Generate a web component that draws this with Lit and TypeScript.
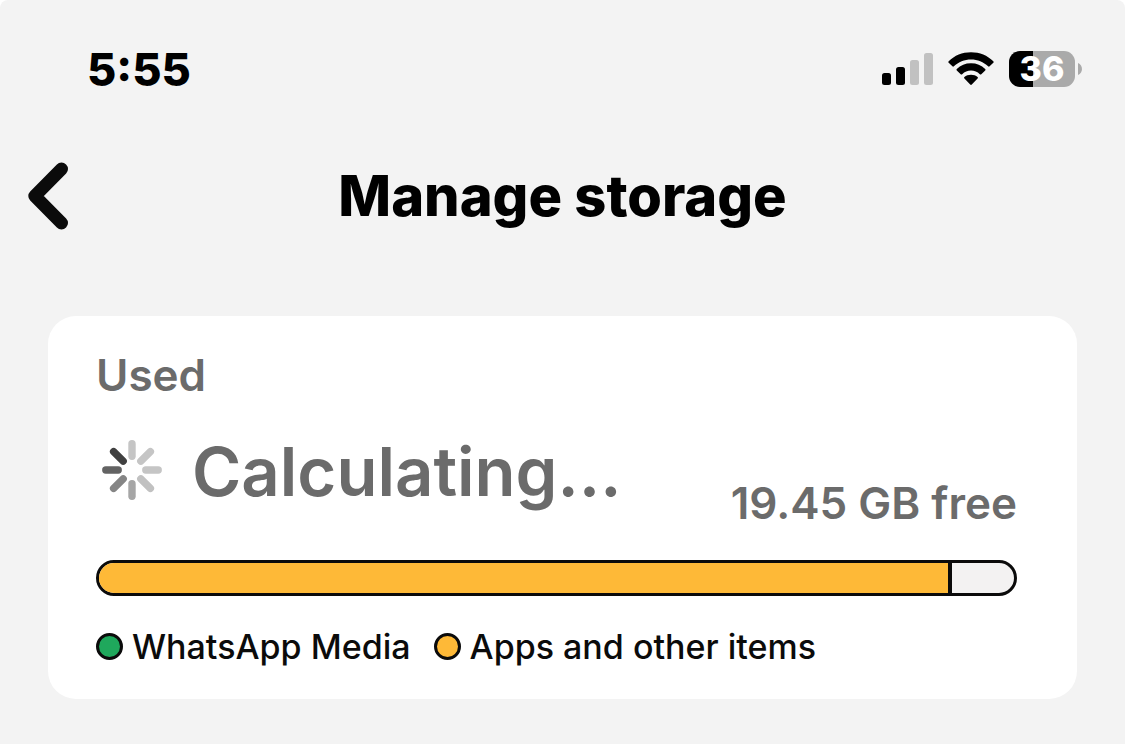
import { LitElement, html, css, svg } from "lit";
import { customElement, property } from "lit/decorators.js";
import { styleMap } from "lit/directives/style-map.js";

@customElement("status-bar")
class StatusBar extends LitElement {
  @property() time = "5:55";
  @property({ type: Number }) battery = 36;

  static styles = css`
    :host {
      display: flex;
      align-items: center;
      justify-content: space-between;
      height: 40px;
      padding: 49px 43px 0 87px;
    }
    .time {
      font-size: 45px;
      line-height: 44px;
      font-weight: 800;
      padding-top: 2px;
    }
    .icons {
      display: flex;
      align-items: center;
    }
    .signal {
      display: block;
      width: 52px;
      height: 34px;
      margin-right: 14px;
    }
    .wifi {
      display: block;
      width: 46px;
      height: 34px;
      margin-right: 15px;
    }
    .battery {
      display: flex;
      align-items: center;
      justify-content: center;
      width: 66px;
      height: 36px;
      border-radius: 11px;
      color: #fff;
      font-size: 34px;
      line-height: 36px;
      font-weight: 800;
    }
    .nub {
      display: block;
      width: 4px;
      height: 12px;
      margin-left: 3px;
    }
  `;

  render() {
    const level = `linear-gradient(to right, #000 ${this.battery}%, #aaa ${this.battery}%)`;
    return html`
      <time class="time">${this.time}</time>
      <div class="icons">
        <svg class="signal" viewBox="0 0 52 34" aria-hidden="true">
          <rect x="0" y="21" width="9" height="12" rx="2.5" />
          <rect x="14" y="15" width="9" height="18" rx="2.5" />
          <rect x="28" y="8" width="9" height="25" rx="2.5" fill="#c1c1c1" />
          <rect x="42" y="1" width="9" height="32" rx="2.5" fill="#c1c1c1" />
        </svg>
        <svg class="wifi" viewBox="0 0 46 34" aria-hidden="true">
          <path d="M23 .3C31.800 .3 39.500 3.600 45.300 9.200Q46.100 10 45.300 10.800L41.600 14.300Q40.900 15 40.100 14.300C35.500 9.900 29.500 7.400 23 7.400S10.500 9.900 5.900 14.300Q5.100 15 4.400 14.300L.7 10.800Q-.1 10 .7 9.200C6.500 3.600 14.200 .3 23 .3Z" />
          <path d="M23 11.300C28.600 11.300 33.400 13.300 37.200 16.900Q38 17.700 37.200 18.500L33.300 22.200Q32.600 22.900 31.800 22.200C29.400 20 26.400 18.600 23 18.600S16.600 20 14.200 22.200Q13.400 22.900 12.700 22.200L8.800 18.500Q8 17.700 8.800 16.900C12.600 13.300 17.400 11.300 23 11.300Z" />
          <path d="M23 22.700C25.600 22.700 27.900 23.500 29.600 24.900Q30.400 25.700 29.600 26.500L23.800 32.500Q23 33.300 22.200 32.500L16.400 26.500Q15.600 25.700 16.400 24.900C18.100 23.500 20.400 22.700 23 22.700Z" />
        </svg>
        <div class="battery" style=${styleMap({ background: level })}>${this.battery}</div>
        <svg class="nub" viewBox="0 0 4 12" aria-hidden="true">
          <path d="M0 0C5.300 2 5.300 10 0 12Z" fill="#aaa" />
        </svg>
      </div>
    `;
  }
}

@customElement("activity-spinner")
class ActivitySpinner extends LitElement {
  static styles = css`
    :host {
      display: block;
    }
    .spinner {
      display: block;
      width: 60px;
      height: 60px;
    }
  `;

  private shades = ["#c5c5c5", "#c5c5c5", "#c5c5c5", "#c1c1c1", "#a6a6a6", "#858585", "#636363", "#404040"];

  render() {
    return html`
      <svg class="spinner" viewBox="0 0 60 60" aria-hidden="true">
        ${this.shades.map(
          (shade, i) => svg`<line x1="30" y1=${i % 2 ? 4 : 3.8} x2="30" y2=${i % 2 ? 17.5 : 16.2} stroke=${shade}
            stroke-width="7.400" stroke-linecap="round" transform="rotate(${i * 45} 30 30)" />`
        )}
      </svg>
    `;
  }
}

@customElement("storage-card")
class StorageCard extends LitElement {
  @property() free = "19.45 GB";
  @property({ type: Number }) used = 93.2;

  static styles = css`
    :host {
      display: block;
      background: #fff;
      border-radius: 28px;
      padding: 35px 60px 32px 48px;
    }
    .label,
    .free {
      margin: 0;
      color: #6b6b6b;
      font-size: 44px;
      line-height: 48px;
      font-weight: 600;
    }
    .summary {
      display: flex;
      align-items: flex-end;
      justify-content: space-between;
      height: 128px;
    }
    .status {
      display: flex;
      align-items: center;
      gap: 30px;
      padding: 0 0 14px 6px;
      color: #6b6b6b;
      font-size: 67px;
      line-height: 82px;
      font-weight: 600;
    }
    .status-text {
      padding-top: 4px;
    }
    .bar {
      box-sizing: border-box;
      height: 36px;
      margin-top: 33px;
      border: 3px solid #0b0b0b;
      border-radius: 18px;
      background: #f3f2f2;
      overflow: hidden;
    }
    .fill {
      box-sizing: border-box;
      height: 100%;
      border-right: 4px solid #0b0b0b;
      background: #feb937;
    }
    .legend {
      display: flex;
      gap: 23px;
      margin: 30px 0 0;
      padding: 0;
      list-style: none;
    }
    .item {
      display: flex;
      align-items: center;
      gap: 9px;
      color: #0b0b0b;
      font-size: 34px;
      line-height: 41px;
      font-weight: 500;
      white-space: nowrap;
    }
    .dot {
      box-sizing: border-box;
      width: 27px;
      height: 27px;
      border: 3px solid #0b0b0b;
      border-radius: 50%;
    }
    .media {
      background: #1fa85c;
    }
    .apps {
      background: #feb937;
    }
  `;

  render() {
    return html`
      <h2 class="label">Used</h2>
      <div class="summary">
        <div class="status" role="status">
          <activity-spinner></activity-spinner>
          <span class="status-text">Calculating…</span>
        </div>
        <p class="free">${this.free} free</p>
      </div>
      <div class="bar" role="meter" aria-label="Storage used" aria-valuenow=${this.used}>
        <div class="fill" style=${styleMap({ width: `${this.used}%` })}></div>
      </div>
      <ul class="legend">
        <li class="item"><span class="dot media"></span>WhatsApp Media</li>
        <li class="item"><span class="dot apps"></span>Apps and other items</li>
      </ul>
    `;
  }
}

@customElement("app-root")
class AppRoot extends LitElement {
  static styles = css`
    :host {
      display: block;
      min-height: 100vh;
      background: #f3f3f3;
      border-radius: 8px 8px 0 0;
      color: #000;
      font-family: Inter, "Liberation Sans", sans-serif;
    }
    .header {
      display: grid;
      grid-template-columns: 96px 1fr 96px;
      align-items: center;
      height: 80px;
      margin-top: 67px;
    }
    .back {
      display: block;
      padding: 0 0 0 28px;
      border: 0;
      background: none;
      cursor: pointer;
    }
    .chevron {
      display: block;
      width: 40px;
      height: 68px;
    }
    .title {
      margin: 0;
      font-size: 56px;
      line-height: 68px;
      font-weight: 800;
      text-align: center;
    }
    .content {
      padding: 80px 48px 45px;
    }
  `;

  render() {
    return html`
      <status-bar></status-bar>
      <header class="header">
        <button class="back" type="button" aria-label="Back">
          <svg class="chevron" viewBox="0 0 40 68" aria-hidden="true">
            <path d="M33.500 7L6.800 34L33.500 61" fill="none" stroke="#0b0b0b" stroke-width="13"
              stroke-linecap="round" stroke-linejoin="round" />
          </svg>
        </button>
        <h1 class="title">Manage storage</h1>
      </header>
      <main class="content">
        <storage-card></storage-card>
      </main>
    `;
  }
}
